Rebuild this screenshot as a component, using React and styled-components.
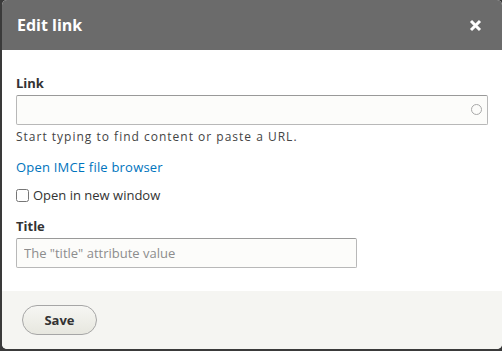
import React from "react";
import styled, { createGlobalStyle } from "styled-components";

const Global = createGlobalStyle`
  html, body {
    margin: 0;
    padding: 0;
    background: #3a3a3a;
    font-family: "Open Sans", "DejaVu Sans", sans-serif;
  }
`;

const Page = styled.div`
  padding: 0 0 2px 2px;
`;

const Dialog = styled.div`
  width: 500px;
  height: 349px;
  background: #fff;
  border-radius: 5px;
  overflow: hidden;
  display: flex;
  flex-direction: column;
`;

const TitleBar = styled.div`
  height: 50px;
  background: #6b6b6b;
  display: flex;
  align-items: center;
  justify-content: space-between;
  padding: 0 19px 0 15px;
  box-sizing: border-box;
`;

const Title = styled.h2`
  margin: 0;
  color: #fff;
  font-size: 16px;
  font-weight: bold;
`;

const Close = styled.button`
  border: none;
  background: none;
  padding: 0;
  width: 16px;
  height: 16px;
  display: flex;
  align-items: center;
  justify-content: center;
  cursor: pointer;
`;

const Body = styled.div`
  flex: 1;
  padding: 24px 12px 0 14px;
  display: flex;
  flex-direction: column;
`;

const Label = styled.label`
  font-size: 13px;
  font-weight: bold;
  color: #333;
  margin-bottom: 3px;
  display: block;
`;

const Field = styled.div`
  position: relative;
  width: ${(p) => p.width}px;
`;

const Input = styled.input`
  width: 100%;
  height: 30px;
  box-sizing: border-box;
  border: 1px solid #b8b8b8;
  border-top-color: #999;
  border-radius: 2px;
  background: #fcfcfa;
  font-family: inherit;
  font-size: 13px;
  padding: 0 7px;
  color: #333;
  &::placeholder {
    color: #8d8d8d;
  }
`;

const Throbber = styled.span`
  position: absolute;
  right: 6px;
  top: 9px;
  width: 9px;
  height: 9px;
  border: 1.5px solid #a8a8a8;
  border-radius: 50%;
`;

const Description = styled.div`
  font-size: 12px;
  letter-spacing: 1px;
  color: #444;
  margin-top: 3px;
`;

const Link = styled.a`
  font-size: 13px;
  letter-spacing: 0.2px;
  color: #0074bd;
  text-decoration: none;
  margin-top: 13px;
`;

const CheckRow = styled.label`
  display: flex;
  align-items: center;
  gap: 4px;
  font-size: 13px;
  color: #333;
  margin-top: 10px;
  margin-bottom: 13px;
  input {
    margin: 0;
    width: 13px;
    height: 13px;
  }
`;

const Footer = styled.div`
  height: 58px;
  background: #f5f5f2;
  display: flex;
  align-items: center;
  padding-left: 20px;
  margin-top: auto;
`;

const Button = styled.button`
  width: 75px;
  height: 30px;
  border: 1px solid #a6a6a6;
  border-radius: 20px;
  background: linear-gradient(to bottom, #f6f6f3, #e7e7df);
  font-family: inherit;
  font-size: 13px;
  font-weight: bold;
  color: #333;
  cursor: pointer;
`;

export default function App() {
  return (
    <>
      <Global />
      <Page>
        <Dialog>
          <TitleBar>
            <Title>Edit link</Title>
            <Close aria-label="Close">
              <svg width="13" height="13" viewBox="0 0 13 13">
                <path d="M2 2 L11 11 M11 2 L2 11" stroke="#fff" strokeWidth="3" strokeLinecap="butt" />
              </svg>
            </Close>
          </TitleBar>
          <Body>
            <Label>Link</Label>
            <Field width={472}>
              <Input type="text" />
              <Throbber />
            </Field>
            <Description>Start typing to find content or paste a URL.</Description>
            <Link href="#">Open IMCE file browser</Link>
            <CheckRow>
              <input type="checkbox" />
              Open in new window
            </CheckRow>
            <Label>Title</Label>
            <Field width={341}>
              <Input type="text" placeholder='The "title" attribute value' />
            </Field>
          </Body>
          <Footer>
            <Button>Save</Button>
          </Footer>
        </Dialog>
      </Page>
    </>
  );
}
